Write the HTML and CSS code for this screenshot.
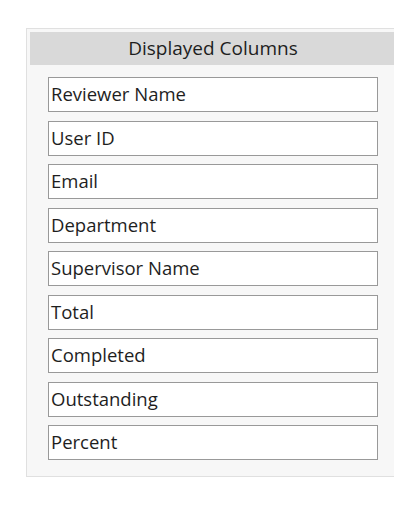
FILE: index.html
```html
<!DOCTYPE html>
<html>
<head>
<meta charset="UTF-8">
<title>Displayed Columns</title>
<link rel="stylesheet" href="styles.css">
</head>
<body>
<div class="panel">
    <h2 class="panel-title">Displayed Columns</h2>
    <ul class="col-list">
        <li class="col-item">Reviewer Name</li>
        <li class="col-item">User ID</li>
        <li class="col-item">Email</li>
        <li class="col-item">Department</li>
        <li class="col-item">Supervisor Name</li>
        <li class="col-item">Total</li>
        <li class="col-item">Completed</li>
        <li class="col-item">Outstanding</li>
        <li class="col-item">Percent</li>
    </ul>
</div>
</body>
</html>
```

FILE: styles.css
```css
html,body{overflow:hidden;}
body,h2,ul,li{margin:0;padding:0;}
body{background:#fff;color:#1e1e1e;font:18.5px/1.2 "Open Sans","Noto Sans",sans-serif;}
.panel{box-sizing:border-box;width:374px;margin:28px 0 0 26px;padding:3px;background:#f7f7f7;border:1px solid #e0e0e0;}
.panel-title{height:33px;line-height:32px;background:#d9d9d9;text-align:center;font-weight:normal;font-size:19px;}
.col-list{list-style:none;display:flex;flex-direction:column;gap:8.5px;padding:12px 18px 13px;}
.col-item{box-sizing:border-box;height:35px;line-height:32px;padding:0 2px;background:#fff;border:1px solid #999;}
```
